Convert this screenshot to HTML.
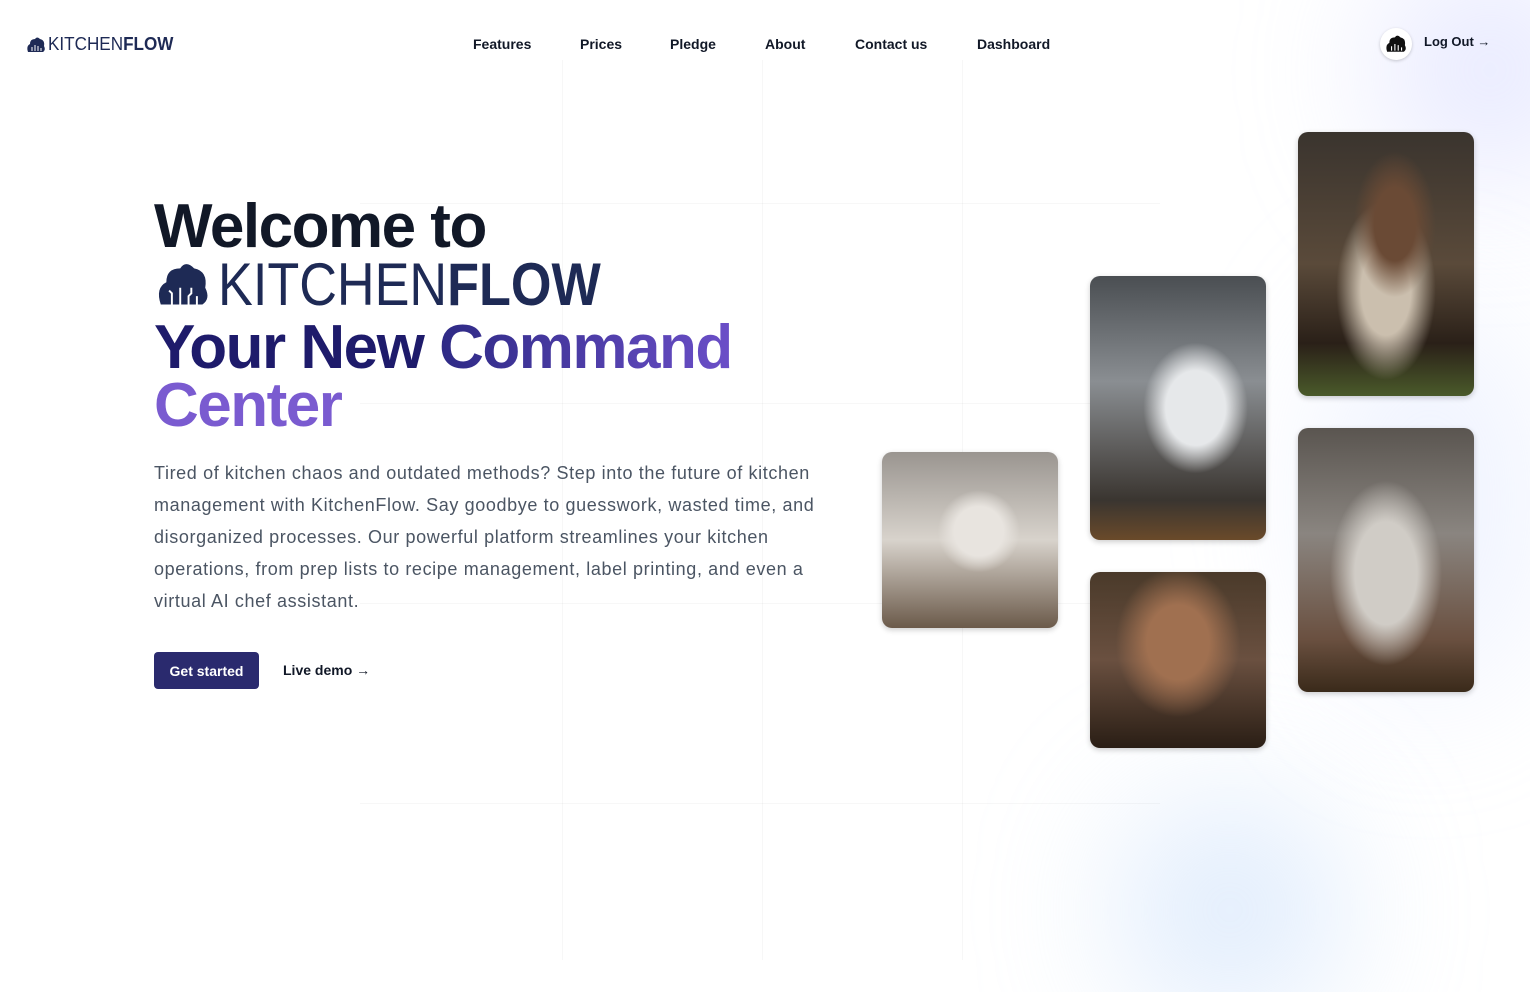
<!DOCTYPE html>
<html><head><meta charset="utf-8"><style>
*{margin:0;padding:0;box-sizing:border-box}
html,body{width:1530px;height:992px;overflow:hidden}
body{background:#fff;font-family:"Liberation Sans",sans-serif;position:relative}
.blob{position:absolute;border-radius:50%;filter:blur(70px)}
.vl{position:absolute;top:60px;height:900px;width:1px;background:rgba(0,0,0,0.03)}
.hl{position:absolute;left:360px;width:800px;height:1px;background:rgba(0,0,0,0.03)}
nav a{position:absolute;top:36px;font-size:14px;font-weight:bold;color:#111827;text-decoration:none}
.logo{position:absolute;display:flex;align-items:center;color:#1e2a55;white-space:nowrap}
h1{position:absolute;left:154px;top:198px;font-size:62px;line-height:58px;font-weight:bold;letter-spacing:-1.5px;color:#111827;white-space:nowrap}
p{position:absolute;left:154px;top:457px;width:690px;font-size:18px;line-height:32px;color:#4b5563;letter-spacing:0.62px}
.img{position:absolute;width:176px;border-radius:10px;box-shadow:0 2px 6px rgba(0,0,0,0.2);overflow:hidden}
</style></head><body>
<div class="blob" style="left:1380px;top:-40px;width:220px;height:220px;background:rgba(200,205,255,0.45)"></div>
<div class="blob" style="left:1120px;top:800px;width:220px;height:220px;background:rgba(190,215,250,0.5)"></div>
<div class="blob" style="left:1320px;top:300px;width:220px;height:400px;background:rgba(210,220,255,0.35)"></div>
<div class="vl" style="left:562px"></div><div class="vl" style="left:762px"></div><div class="vl" style="left:962px"></div>
<div class="hl" style="top:203px"></div><div class="hl" style="top:403px"></div><div class="hl" style="top:603px"></div><div class="hl" style="top:803px"></div>

<div class="logo" style="left:26px;top:34px;font-size:18px">
<svg width="20" height="18" viewBox="0 0 20 18"><path d="M2 16 Q0 10 4 8 Q4 3 9 3 Q11 0 14 3 Q19 4 18 10 Q20 14 17 16Z" fill="#1e2a55"/><path d="M6 15V11M9 15V9M12 15V10M15 15V12" stroke="#fff" stroke-width="1"/></svg>
<span style="display:inline-block;transform:scaleX(0.95);transform-origin:left;margin-left:2px"><span>KITCHEN</span><b>FLOW</b></span></div>

<nav><a style="left:473px">Features</a><a style="left:580px">Prices</a><a style="left:670px">Pledge</a><a style="left:765px">About</a><a style="left:855px">Contact us</a><a style="left:977px">Dashboard</a></nav>
<div style="position:absolute;left:1380px;top:28px;width:32px;height:32px;border-radius:50%;background:#fff;box-shadow:0 1px 3px rgba(0,0,0,.2);display:flex;align-items:center;justify-content:center"><svg width="24" height="20" viewBox="0 0 20 18"><path d="M2 16 Q0 10 4 8 Q4 3 9 3 Q11 0 14 3 Q19 4 18 10 Q20 14 17 16Z" fill="#111"/><path d="M6 15V11M9 15V9M12 15V10M15 15V12" stroke="#fff" stroke-width="1"/></svg></div>
<div style="position:absolute;left:1424px;top:34px;font-size:13px;font-weight:bold;color:#111827">Log Out →</div>

<h1>Welcome to<br>
<span style="display:inline-flex;align-items:center;color:#1e2a55;letter-spacing:0">
<svg width="58" height="50" viewBox="0 0 20 18" style="margin-right:6px"><path d="M2 16 Q0 10 4 8 Q4 3 9 3 Q11 0 14 3 Q19 4 18 10 Q20 14 17 16Z" fill="#1e2a55"/><path d="M6 16V12L5 11M9 16V10M12 16V13L13 12V10M15 16V13" stroke="#fff" stroke-width="0.7" fill="none"/></svg>
<span style="display:inline-block;transform:scaleX(0.87);transform-origin:left;font-size:60px"><span style="font-weight:normal">KITCHEN</span><span>FLOW</span></span></span><br>
<span style="color:#1e1b6b">Your New <span style="background:linear-gradient(90deg,#2e2a85,#6b4fc8);-webkit-background-clip:text;color:transparent">Command</span></span><br>
<span style="color:#7a5bd0">Center</span></h1>

<p>Tired of kitchen chaos and outdated methods? Step into the future of kitchen management with KitchenFlow. Say goodbye to guesswork, wasted time, and disorganized processes. Our powerful platform streamlines your kitchen operations, from prep lists to recipe management, label printing, and even a virtual AI chef assistant.</p>

<div style="position:absolute;left:154px;top:652px;width:105px;height:37px;background:#2a2a6e;border-radius:4px;color:#fff;font-size:14px;font-weight:bold;display:flex;align-items:center;justify-content:center">Get started</div>
<div style="position:absolute;left:283px;top:662px;font-size:14px;font-weight:bold;color:#111827">Live demo →</div>

<div class="img" style="left:882px;top:452px;height:176px;background:radial-gradient(circle at 55% 45%,#e8e4df 0 18%,transparent 30%),linear-gradient(180deg,#9a9590,#d8d3cc 50%,#6b5a4a)"></div>
<div class="img" style="left:1090px;top:276px;height:264px;background:radial-gradient(ellipse at 60% 50%,#e6e8ea 0 20%,transparent 35%),linear-gradient(180deg,#4a4e52,#8a8e92 40%,#3a3530 85%,#6a4a2a)"></div>
<div class="img" style="left:1090px;top:572px;height:176px;background:radial-gradient(ellipse at 50% 40%,#a07050 0 25%,transparent 50%),linear-gradient(180deg,#4a3a2a,#6a5040 50%,#2a1e15)"></div>
<div class="img" style="left:1298px;top:132px;height:264px;background:radial-gradient(ellipse at 55% 35%,#6a4a35 0 15%,transparent 30%),radial-gradient(ellipse at 50% 60%,#cbbfae 0 20%,transparent 40%),linear-gradient(180deg,#3a342e,#5a4a3a 50%,#2a2018 80%,#4a5a2a)"></div>
<div class="img" style="left:1298px;top:428px;height:264px;background:radial-gradient(ellipse at 50% 55%,#d0ccc6 0 25%,transparent 45%),linear-gradient(180deg,#5a5550,#8a8580 40%,#6a5040 80%,#3a2a1a)"></div>
</body></html>
